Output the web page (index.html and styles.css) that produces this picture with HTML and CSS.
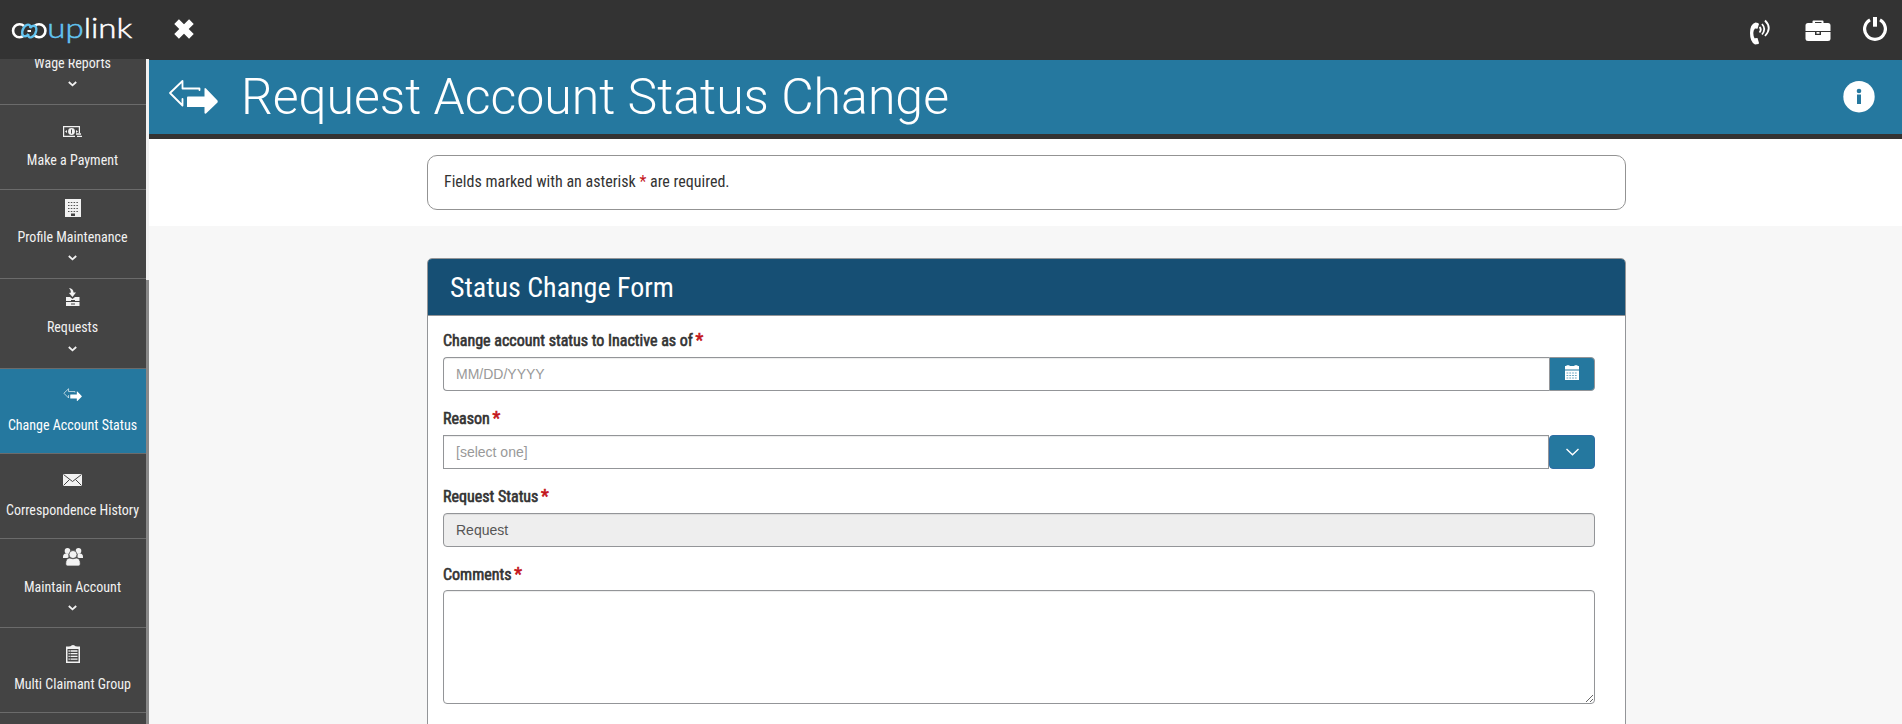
FILE: index.html
```html
<!DOCTYPE html>
<html lang="en">
<head>
<meta charset="utf-8">
<title>Request Account Status Change</title>
<link rel="stylesheet" href="styles.css">
</head>
<body>
<svg class="defs" width="0" height="0" aria-hidden="true">
  <symbol id="swap" viewBox="0 0 50 36">
    <path d="M31.500 11V9.500H14.500V2L2 14l12.500 12.500V20" fill="none" stroke="currentColor" stroke-width="1.800" stroke-linejoin="round" stroke-linecap="round"/>
    <path d="M19.500 17.500h17V9.500Q37 8.500 38 9.500L49.500 21.500Q50 22.500 49.500 23.500L38 34.500Q37 35 36.500 34V28h-17Q19 28 19 27.500V18.500Z" fill="currentColor"/>
  </symbol>
  <symbol id="chev" viewBox="0 0 9 6"><path d="M.8 1l3.700 3.400L8.200 1" fill="none" stroke="currentColor" stroke-width="1.800"/></symbol>
</svg>
<header class="topbar">
  <svg class="logo" width="136" height="60" viewBox="0 0 136 60">
    <g fill="none">
      <path d="M24 26a6.500 6.500 0 1 0 0 9.500" stroke="#fff" stroke-width="2.600"/>
      <path d="M34.500 26a6.500 6.500 0 1 1 0 9.500" stroke="#fff" stroke-width="2.600"/>
      <path d="M30.500 27.500q-.5-3.500-3.500-2.700-3.500 1.500-4.700 6.500-.7 5 2.700 5 2 0 3.500-2.500" stroke="#62c4f0" stroke-width="2.400"/>
      <path d="M28 34.500q.5 3.500 3.500 2.700 3.500-1.500 4.700-6.500.7-5-2.700-5-2 0-3.500 2.500" stroke="#62c4f0" stroke-width="2.400"/>
      <path d="M27.500 31h3.500" stroke="#fff" stroke-width="2"/>
    </g>
    <text x="47.300" y="37.500" class="logo-text" textLength="85" lengthAdjust="spacingAndGlyphs"><tspan fill="#62c4f0" stroke="#62c4f0">up</tspan><tspan fill="#fff" stroke="#fff">link</tspan></text>
  </svg>
  <svg class="close" width="22" height="22" viewBox="0 0 22 22"><path d="M3.600 3.600l14.800 14.800M18.400 3.600L3.600 18.400" stroke="#fff" stroke-width="6.600"/></svg>
  <nav class="tools">
    <svg class="phone" width="22" height="26" viewBox="0 0 22 26"><path d="M9 4L6.500 3.500Q1 5 1 14t5 11.500l3.500-.5.500-1-1.500-5-3 .3Q4.300 17 4.300 14T6 9.500l2.500.3L10 5Z" fill="#fff"/><path d="M10.500 8q2.500 2.500 0 5.500M13 5q4.500 5 0 10.500M16 1.500q7.500 7.500 0 15.500" fill="none" stroke="#fff" stroke-width="1.800"/></svg>
    <svg class="case" width="26" height="22" viewBox="0 0 26 22"><path d="M7.500 3V1.500Q7.500.5 8.500.5h9q1 0 1 1V3H23q2.500 0 2.500 2.500V11H.5V5.500Q.5 3 3 3ZM10 3h6.500V2H10ZM.5 12H10v3h6v-3h9.500v7q0 2-2.500 2H3q-2.500 0-2.500-2ZM11.500 12h3v1.800h-3Z" fill="#fff" fill-rule="evenodd"/></svg>
    <svg class="power" width="24" height="24" viewBox="0 0 24 24"><path d="M7 2.800a10.400 10.400 0 1 0 10 0" fill="none" stroke="#fff" stroke-width="3.200"/><path d="M10 0h4v9.700h-4Z" fill="#fff"/></svg>
  </nav>
</header>
<div class="shell">
  <aside class="sidebar">
    <ul class="menu">
      <li class="item more"><i></i><span>Wage Reports</span><svg class="chev"><use href="#chev"/></svg></li>
      <li class="item"><i><svg width="19" height="11" viewBox="0 0 19 11"><path d="M0 0h17v7h-1.200V1.200H1.200v8.600H12V11H0Z" fill="currentColor"/><circle cx="8.500" cy="5.500" r="3.400" fill="currentColor"/><path d="M8.500 3.500v4" stroke="#444"/><path d="M2 5.500L4 4v3ZM15 5.500L13 4v3Z" fill="currentColor"/><path d="M13 8h5M14 10.300h5" stroke="currentColor" stroke-width="1.300"/></svg></i><span>Make a Payment</span></li>
      <li class="item more"><i><svg width="16" height="18" viewBox="0 0 16 18"><path d="M0 0h16v18H0Z" fill="currentColor"/><path d="M3 3.500h10M3 6.500h10M3 9.500h10M3 12.500h10" stroke="#555" stroke-width="1.200" stroke-dasharray="1.500 1.300"/><path d="M6 14.500h4V17H6Z" fill="#444"/></svg></i><span>Profile Maintenance</span><svg class="chev"><use href="#chev"/></svg></li>
      <li class="item low more"><i><svg width="14" height="18" viewBox="0 0 14 18"><path d="M3 0q4.500.5 4.500 4.500H10L6.500 9 3 5l2-.5Q5 2 3 0ZM0 9h4l2.500 2L9 9h4.500v4H0ZM0 14h13.500v4H0Z" fill="currentColor"/><path d="M5 12.500h4M5 16h4" stroke="#444"/></svg></i><span>Requests</span><svg class="chev"><use href="#chev"/></svg></li>
      <li class="item low active"><i><svg width="19" height="13.500"><use href="#swap"/></svg></i><span>Change Account Status</span></li>
      <li class="item low"><i><svg width="19" height="12" viewBox="0 0 19 12"><path d="M0 0h19v12H0Z" fill="currentColor"/><path d="M.5.500l9 7 9-7M.5 11.500l6-6M18.500 11.500l-6-6" fill="none" stroke="#444"/></svg></i><span>Correspondence History</span></li>
      <li class="item low more"><i><svg width="20" height="18" viewBox="0 0 20 18"><g fill="currentColor"><circle cx="4.500" cy="2.900" r="2.800"/><circle cx="15.500" cy="2.900" r="2.800"/><path d="M0 9q0-3.500 3-3.500h2.500V9.500L4 10H0ZM20 9q0-3.500-3-3.500h-2.500V9.500L16 10h4Z"/></g><g fill="currentColor" stroke="#444" stroke-width=".7"><circle cx="10" cy="6.500" r="4"/><path d="M2.700 16q0-6 4-6 3.300 1.500 6.600 0 4 0 4 6 0 2-2 2H4.700q-2 0-2-2Z"/></g></svg></i><span>Maintain Account</span><svg class="chev"><use href="#chev"/></svg></li>
      <li class="item low"><i><svg width="14" height="18" viewBox="0 0 14 18"><path d="M0 1.500h4.500Q5 0 7 0t2.500 1.500H14V18H0ZM1.500 4v12.500h11V4Z" fill="currentColor" fill-rule="evenodd"/><path d="M3.500 1.500h7v2h-7Z" fill="currentColor"/><path d="M2.500 6h1.300M2.500 8.700h1.300M2.500 11.400h1.300M2.500 14.200h1.300M4.500 6h7M4.500 8.700h7M4.500 11.400h7M4.500 14.200h7" stroke="currentColor" stroke-width="1.300"/></svg></i><span>Multi Claimant Group</span></li>
      <li class="item"></li>
    </ul>
    <div class="track"><div class="thumb"></div></div>
  </aside>
  <main class="main">
    <div class="banner">
      <svg class="banner-icon" width="50" height="36"><use href="#swap"/></svg>
      <h1>Request Account Status Change</h1>
      <svg class="info" width="32" height="32" viewBox="0 0 32 32"><circle cx="16" cy="15.700" r="15.700" fill="#fff"/><circle cx="16" cy="10" r="2.300" fill="#25789f"/><path d="M14 13.500h4v9.500h-4Z" fill="#25789f"/></svg>
    </div>
    <div class="notice-band"><div class="notice">Fields marked with an asterisk <b>*</b> are required.</div></div>
    <section class="card">
      <h2>Status Change Form</h2>
      <form class="form">
        <div class="field"><label>Change account status to Inactive as of <b>*</b></label>
          <div class="row"><input class="date" type="text" placeholder="MM/DD/YYYY"><span class="addon"><svg width="14" height="15" viewBox="0 0 14 15"><path d="M0 1h1.500V.3h3V1h5V.3h3V1H14v3.500H0ZM0 5.500h14V15H0Z" fill="#fff"/><path d="M1.500 8h11M1.500 10.500h11M1.500 13h11" stroke="#6ba6c1" stroke-dasharray="1.800 1"/></svg></span></div></div>
        <div class="field"><label>Reason <b>*</b></label>
          <div class="row"><input class="select" type="text" placeholder="[select one]"><button class="drop" type="button"><svg width="13" height="8" viewBox="0 0 13 8"><path d="M.5 1l6 5.700 6-5.700" fill="none" stroke="#fff" stroke-width="1.400"/></svg></button></div></div>
        <div class="field"><label>Request Status <b>*</b></label>
          <div class="row"><input class="readonly" type="text" value="Request" readonly></div></div>
        <div class="field"><label>Comments <b>*</b></label><textarea></textarea></div>
      </form>
    </section>
  </main>
</div>
</body>
</html>
```
FILE: styles.css
```css
* { box-sizing: border-box; }
html, body { height: 100%; margin: 0; }
body { display: flex; flex-direction: column; overflow: hidden; background: #f7f7f7; color: #333; font: 16px "Roboto Condensed", Roboto, sans-serif; font-stretch: 75%; }
.defs { position: absolute; }
svg { display: block; flex: none; }
.topbar { display: flex; align-items: center; height: 59px; flex: none; background: #333; padding-right: 15px; }
.logo-text { font: 300 28px Lato, sans-serif; stroke-width: .5px; }
.close { margin: -1px 0 0 37px; }
.tools { display: flex; align-items: center; margin-left: auto; }
.phone { margin: 5px 34px 0 0; }
.case { margin: 3px 32px 0 0; }
.power { margin-top: -1px; }
.shell { display: flex; flex: 1; min-height: 0; }
.sidebar { display: flex; width: 149px; flex: none; background: #444; overflow: hidden; }
.menu { width: 146px; margin: -43.300px 0 0; padding: 0; list-style: none; }
.item { display: flex; flex-direction: column; align-items: center; height: 85px; padding: 17px 1px 0 0; border-bottom: 1px solid #6b6b6b; color: #f2f2f2; font-size: 14px; line-height: 20px; white-space: nowrap; }
.item.more { height: 89.300px; padding-top: 9px; }
.item.active { background: #25789f; color: #fff; }
.item i { display: flex; align-items: center; height: 18px; margin-bottom: 10px; }
.item.low i { margin-bottom: 11px; }
.chev { width: 9px; height: 6px; margin-top: 8.300px; }
.track { width: 3px; background: #f1f1f1; }
.thumb { height: 444px; margin-top: 221px; background: #888; }
.main { flex: 1; min-width: 0; background: #f7f7f7; }
.banner { display: flex; align-items: center; height: 80px; background: #25789f; border-top: 1px solid #333; border-bottom: 5px solid #333; padding: 0 27px 0 19px; }
.banner-icon { color: #fff; }
h1 { margin: 0 auto 0 23px; color: #fff; font-family: Roboto, sans-serif; font-stretch: 100%; font-size: 50px; line-height: 60px; font-weight: 300; white-space: nowrap; }
.notice-band { height: 87px; background: #fff; padding: 16px 276px 0 278px; }
.notice { height: 55px; border: 1px solid #939393; border-radius: 10px; padding: 15px 16px; line-height: 22px; }
b { color: #c4161c; font-weight: inherit; }
label b { font-size: 18px; line-height: 1; margin-left: -1px; }
.card { margin: 32px 276px 0 278px; height: 600px; border: 1px solid #939598; border-radius: 5px; background: #fff; overflow: hidden; }
h2 { margin: 0; height: 57px; background: #164f74; border-bottom: 1px solid #939598; color: #fff; padding: 0 22px; font-size: 28px; line-height: 57px; font-weight: 400; }
.form { padding: 15px 30px 0 15px; }
.field { margin-bottom: 18px; }
label { display: block; height: 26px; line-height: 20px; font-weight: 400; -webkit-text-stroke: .6px currentColor; }
.row { display: flex; height: 34px; }
input, textarea { font: 14px "Liberation Sans", Arial, sans-serif; color: #555; border: 1px solid #939598; border-radius: 4px; padding: 6px 12px; background: #fff; outline: 0; box-shadow: inset 0 1px 1px rgba(0,0,0,.075); margin: 0; }
input { flex: 1; min-width: 0; }
input::placeholder { color: #999; opacity: 1; }
.date { border-radius: 4px 0 0 4px; border-right: 0; }
.addon { display: flex; align-items: center; justify-content: center; width: 46px; padding-bottom: 3px; background: #25789f; border: 1px solid #939598; border-radius: 0 4px 4px 0; }
.select { border-radius: 0; }
.drop { display: flex; align-items: center; justify-content: center; width: 46px; padding: 0; background: #25789f; border: 1px solid #2e6da4; border-radius: 4px; }
.readonly { background: #eee; }
textarea { display: block; width: 100%; height: 114px; margin-top: -1px; resize: both; }
```
